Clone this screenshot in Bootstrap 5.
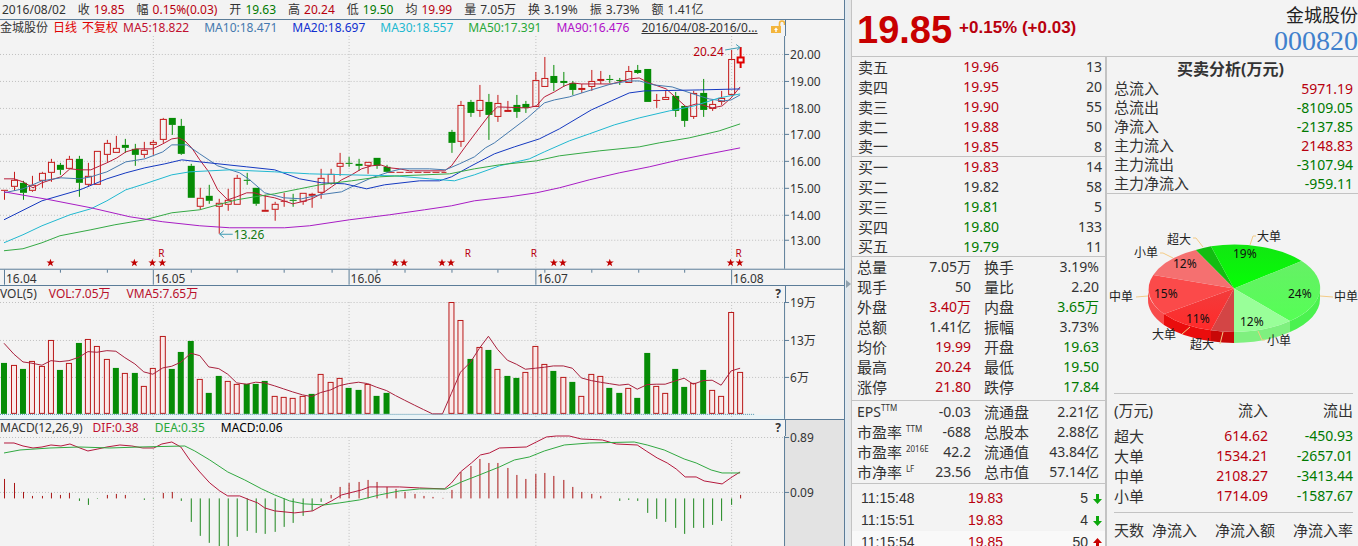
<!DOCTYPE html>
<html lang="zh-CN">
<head>
<meta charset="utf-8">
<meta name="viewport" content="width=device-width, initial-scale=1">
<title>金城股份 000820</title>
<link href="https://cdn.jsdelivr.net/npm/bootstrap@5.3.0/dist/css/bootstrap.min.css" rel="stylesheet">
<style>
:root{--line:#5b7c98;--rule:#c3c3c3;--up:#b8000e;--down:#007a00;--ink:#333}
body{background:#f3f3f3;color:var(--ink);font-family:"Noto Sans","Noto Sans CJK SC",sans-serif;font-size:12px;line-height:16px}
.up{color:var(--up)}
.down{color:var(--down)}
.charts{min-width:0}
.quote-bar{height:20px;gap:12px;padding:0 2px;border-bottom:1px solid var(--line)}
.quote-bar b{font-weight:400;margin-left:4px}
.panel{border-right:1px solid var(--line)}
.panel svg{display:block;width:100%;height:auto;overflow:visible}
.legend-row{height:16px}
.legend-main{width:93%;gap:16px}
.averages{gap:15px}
.dates{gap:13px;margin-left:12px}
.legend-axis{width:7%;border-left:1px solid var(--line)}
.legend-axis.shade{background:#e3e3e3}
.line-top{border-top:1px solid var(--line)}
.help-btn{border:0;background:none;padding:0;font-weight:700;line-height:14px;margin-right:4px;color:var(--ink)}
.range-link{color:var(--ink)}
.splitter{width:6px;background:linear-gradient(90deg,#dfe9f1,#e6e6e6);border:0;padding:0}
.side{width:507px;border-left:1px solid var(--rule)}
.side-head{height:58px;border-bottom:1px solid var(--rule)}
.price{font:700 38px/44px "Liberation Sans",sans-serif;color:#c80000}
.change{font:700 17px/24px "Liberation Sans",sans-serif;color:#b8000e}
.stock-name{font-size:18px;line-height:22px;color:#222}
.stock-code{font:28px/30px "Liberation Serif",serif;color:#3f80cc}
.book{width:255px;border-right:2px solid var(--rule)}
.grid-table{width:100%;table-layout:fixed;font-size:14px;border-collapse:separate;border-spacing:0}
.grid-table td,.grid-table th{height:20px;line-height:20px;padding:0;font-weight:400;white-space:nowrap}
.grid-table th{font-size:15px}
.grid-table td{text-align:right}
.grid-table sup{font-size:8px;top:-6px;line-height:8px}
.sect{border-bottom:1px solid var(--rule)}
.grid-table.sect tr:last-child>*{height:19px;line-height:19px}
.ticks{margin-top:3px}
.ticks td{height:22px;line-height:22px;font-family:"Liberation Sans",sans-serif}
.ticks .hot{background:#f9f9f9}
.flow{font-size:15px;min-width:0}
.flow h2{font-size:16px;font-weight:700;line-height:20px;margin:0;padding-right:6px}
.sum td,.sum th{height:19px;line-height:19px}
.flow-head th{height:32px}
</style>
</head>
<body class="vh-100 overflow-hidden">
<main class="d-flex vh-100">
 <section class="charts flex-grow-1">
  <div class="quote-bar d-flex align-items-center text-nowrap panel">
   <span>2016/08/02</span><span>收<b class="up">19.85</b></span><span>幅<b class="up">0.15%(0.03)</b></span><span>开<b class="down">19.63</b></span><span>高<b class="up">20.24</b></span><span>低<b class="down">19.50</b></span><span>均<b class="up">19.99</b></span><span>量<b>7.05万</b></span><span>换<b>3.19%</b></span><span>振<b>3.73%</b></span><span>额<b>1.41亿</b></span>
  </div>
  <div class="panel">
   <div class="legend-row d-flex text-nowrap">
    <div class="legend-main d-flex gap-0">
     <div class="averages d-flex">
      <span class="d-flex" style="gap:5px"><span>金城股份</span><span style="color:#e00000">日线</span><span style="color:#e00000">不复权</span><span style="color:#c01030">MA5:18.822</span></span>
      <span style="color:#4579ae">MA10:18.471</span><span style="color:#1030d0">MA20:18.697</span><span style="color:#20b8d0">MA30:18.557</span><span style="color:#28a838">MA50:17.391</span><span style="color:#b010c8">MA90:16.476</span>
     </div>
     <div class="dates d-flex">
      <a href="#" class="range-link">2016/04/08-2016/0...</a>
      <svg viewBox="0 0 16 14" style="width:16px;height:14px" aria-hidden="true"><path d="M8.500 6V3.500a2.500 2.500 0 0 1 5 0V5" fill="none" stroke="#f3b53c" stroke-width="1.600"/><path d="M0 6h10v7H0z" fill="#f3b53c"/><path d="M5 7.500 3 10h1.300v2h1.400v-2H7z" fill="#fff"/></svg>
     </div>
    </div>
    <div class="legend-axis"></div>
   </div>
   <svg id="kline" viewBox="0 36 845 249" role="img" aria-label="K线图"></svg>
  </div>
  <div class="panel line-top">
   <div class="legend-row d-flex text-nowrap">
    <div class="legend-main d-flex"><span class="d-flex" style="gap:12px"><span>VOL(5)</span><span style="color:#b8102c">VOL:7.05万</span></span><span style="color:#b8102c">VMA5:7.65万</span><button class="help-btn ms-auto" aria-label="成交量说明">?</button></div>
    <div class="legend-axis"></div>
   </div>
   <svg id="volume" viewBox="0 302 845 117" role="img" aria-label="成交量"></svg>
  </div>
  <div class="panel line-top">
   <div class="legend-row d-flex text-nowrap">
    <div class="legend-main d-flex"><span class="d-flex" style="gap:10px"><span>MACD(12,26,9)</span><span style="color:#c01030">DIF:0.38</span></span><span style="color:#28a838">DEA:0.35</span><span class="text-black">MACD:0.06</span><button class="help-btn ms-auto" aria-label="MACD说明">?</button></div>
    <div class="legend-axis shade"></div>
   </div>
   <svg id="macd" viewBox="0 436 845 112" role="img" aria-label="MACD"></svg>
  </div>
 </section>

 <button class="splitter d-flex flex-shrink-0 align-items-center justify-content-center" aria-label="收起侧栏"><svg width="5" height="8" viewBox="0 0 5 8" style="margin-top:22px"><path d="M0 0l5 4-5 4z" fill="#8fa0ac"/></svg></button>

 <aside class="side flex-shrink-0 d-flex flex-column">
  <header class="side-head d-flex justify-content-between">
   <div class="d-flex align-items-center text-nowrap" style="gap:7px;padding-left:5px"><span class="price pt-1">19.85</span><span class="change">+0.15% (+0.03)</span></div>
   <div class="text-end pt-1"><div class="stock-name">金城股份</div><div class="stock-code">000820</div></div>
  </header>
  <div class="d-flex flex-grow-1">
   <div class="book flex-shrink-0">
    <table class="grid-table sect" id="asks"></table>
    <table class="grid-table sect" id="bids"></table>
    <div class="sect" style="padding-bottom:3px"><table class="grid-table stats" id="stats"></table></div>
    <div class="sect" style="padding-bottom:1px"><table class="grid-table stats" id="values"></table></div>
    <table class="grid-table ticks" id="ticks"></table>
   </div>
   <div class="flow flex-grow-1">
    <div class="sect" style="padding:2px 5px 0 7px">
     <h2 class="text-center">买卖分析(万元)</h2>
     <table class="grid-table sum">
      <tr><th>总流入</th><td class="up">5971.19</td></tr>
      <tr><th>总流出</th><td class="down">-8109.05</td></tr>
      <tr><th>净流入</th><td class="down">-2137.85</td></tr>
      <tr><th>主力流入</th><td class="up">2148.83</td></tr>
      <tr><th>主力流出</th><td class="down">-3107.94</td></tr>
      <tr><th>主力净流入</th><td class="down">-959.11</td></tr>
     </table>
    </div>
    <svg id="pie" class="d-block w-100" viewBox="1107 195 251 199" role="img" aria-label="资金流向">
     <defs>
      <linearGradient id="g1" x1="0" y1="0" x2="0" y2="1"><stop offset="0" stop-color="#12e612"/><stop offset="1" stop-color="#05ff05"/></linearGradient>
      <linearGradient id="g2" x1="0" y1="0" x2="0" y2="1"><stop offset="0" stop-color="#66f066"/><stop offset="1" stop-color="#55ff55"/></linearGradient>
      <linearGradient id="r1" x1="0" y1="0" x2="0" y2="1"><stop offset="0" stop-color="#f23c3c"/><stop offset="1" stop-color="#ff2a2a"/></linearGradient>
     </defs>
     <path d="M1320 289.500A86 43.500 0 0 1 1290 322v11A86 43.500 0 0 0 1320 300z" fill="#4bf24f"/>
     <path d="M1290 322A86 43.500 0 0 1 1234 333v11A86 43.500 0 0 0 1290 333z" fill="#7ff07f"/>
     <path d="M1234 333A86 43.500 0 0 1 1211 331.300v11A86 43.500 0 0 0 1234 344z" fill="#c80808"/>
     <path d="M1211 331.300A86 43.500 0 0 1 1164 315v11A86 43.500 0 0 0 1211 342.300z" fill="#ea0d0d"/>
     <path d="M1164 315A86 43.500 0 0 1 1148 289.500v10.500A86 43.500 0 0 0 1164 326z" fill="#f84b4b"/>
     <g>
      <path d="M1234 289.500L1195.700 251A86 43.500 0 0 1 1211 247.300z" fill="#12bd12"/>
      <path d="M1234 289.500L1211 247.300A86 43.500 0 0 1 1301.700 262z" fill="url(#g1)"/>
      <path d="M1234 289.500L1301.700 262A86 43.500 0 0 1 1290 322z" fill="url(#g2)"/>
      <path d="M1234 289.500L1290 322A86 43.500 0 0 1 1234 333z" fill="#99ff99"/>
      <path d="M1234 289.500V333A86 43.500 0 0 1 1211 331.300z" fill="#d34545"/>
      <path d="M1234 289.500L1211 331.300A86 43.500 0 0 1 1164 315z" fill="url(#r1)"/>
      <path d="M1234 289.500L1164 315A86 43.500 0 0 1 1153.300 276z" fill="#fb4a4a"/>
      <path d="M1234 289.500L1153.300 276A86 43.500 0 0 1 1195.700 251z" fill="#f57070"/>
     </g>
     <path d="M1193 239h3l7 9M1256 237h-3l-3 9M1160 254h3l10 5M1136 298l12-1M1320 297l13 1M1182 335l8-7M1220 345l3-12M1265 341h-3l-4-9" fill="none" stroke="#f3cb86"/>
     <g font-size="12" fill="#222">
      <text x="1167" y="245">超大</text><text x="1257" y="242">大单</text><text x="1134" y="258">小单</text><text x="1109" y="302">中单</text><text x="1334" y="302">中单</text><text x="1152" y="340">大单</text><text x="1190" y="350">超大</text><text x="1267" y="346">小单</text>
      <g fill="#111"><text x="1233" y="259">19%</text><text x="1288" y="299">24%</text><text x="1240" y="327">12%</text><text x="1186" y="324">11%</text><text x="1154" y="299">15%</text><text x="1173" y="269">12%</text></g>
     </g>
    </svg>
    <div style="margin:0 5px 0 7px">
     <div class="border-top sect" style="border-color:var(--rule)!important;padding-bottom:6px">
      <table class="grid-table">
       <colgroup><col><col><col style="width:85px"></colgroup>
       <tr class="flow-head"><th>(万元)</th><th class="text-end">流入</th><th class="text-end">流出</th></tr>
       <tr><th>超大</th><td class="up">614.62</td><td class="down">-450.93</td></tr>
       <tr><th>大单</th><td class="up">1534.21</td><td class="down">-2657.01</td></tr>
       <tr><th>中单</th><td class="up">2108.27</td><td class="down">-3413.44</td></tr>
       <tr><th>小单</th><td class="up">1714.09</td><td class="down">-1587.67</td></tr>
      </table>
     </div>
     <div class="d-flex text-nowrap" style="padding-top:9px"><span>天数</span><span class="ms-2">净流入</span><span class="ms-auto">净流入额</span><span class="ms-auto">净流入率</span></div>
    </div>
   </div>
  </div>
 </aside>
</main>
<script src="https://cdn.jsdelivr.net/npm/bootstrap@5.3.0/dist/js/bootstrap.bundle.min.js"></script>
<script>
const RED='#c41818', GREEN='#058c05', LINE='#5b7c98';
const X=i=>Math.floor(4.7+9.326*i);
const months=[153,349,536,732];
const el=id=>document.getElementById(id);
const hline=(y,x2=785)=>`<path d="M0 ${y}.5H${x2}" stroke="#c0c0c0" stroke-dasharray="1 2"/>`;
const vlines=(a,b)=>months.map(x=>`<path d="M${x}.5 ${a}V${b}" stroke="#c0c0c0" stroke-dasharray="1 2"/>`).join('');
const poly=(pts,c)=>`<polyline points="${pts}" fill="none" stroke="${c}" stroke-width="1"/>`;
const label=(y,t)=>`<path d="M785 ${y}.5h5" stroke="${LINE}"/><text x="791" y="${y+5}" fill="#333">${t}</text>`;
const wrap=s=>`<g font-size="12">${s}</g>`;

/* candles: colour high open/close-top open/close-bottom low */
const candles=`r190 190 191 200,r172 180 187 191,g181 183 193 200,r176 185 191 192,r172 173 181 188,r159 162 173 182,g163 165 170 175,r156 159 169 169,g156 159 183 197,r163 176 185 187,r151 151 185 185,r140 143 155 162,r136 148 153 153,g139 145 148 153,g144 149 155 166,r142 150 155 158,r140 142 145 155,r118 119 140 143,g118 118 125 135,g119 126 154 155,g164 166 198 198,r188 198 207 210,g185 196 201 204,r199 203 207 234,r189 200 205 211,r175 178 205 205,g173 180 181 185,g188 188 204 206,r195 210 212 212,r202 204 210 221,r193 201 202 207,g194 200 201 207,r193 193 202 205,r193 194 196 208,r169 178 193 199,r169 174 184 185,r153 163 167 176,g157 163 164 167,g159 164 166 171,r162 162 166 174,g158 158 166 169,g165 167 172 173,,,,,,,g130 132 143 153,r101 105 142 147,g100 102 113 117,r85 100 111 117,g94 102 115 140,r95 103 117 122,r101 110 112 112,g95 105 112 118,g101 104 108 113,r72 80 107 107,r57 78 87 87,g65 76 83 91,g72 81 83 87,g81 83 90 95,r84 88 90 93,r70 81 87 91,r71 79 81 84,g75 79 80 83,g78 80 81 85,r66 71 83 83,g65 70 73 74,g69 69 102 102,r94 100 101 108,r91 97 100 100,g92 96 111 117,g106 106 121 127,r91 93 117 119,g79 93 110 117,r100 104 109 111,r91 98 102 105,r50 59 95 95,r47 57 63 68`.split(',');
let k=[54,81,108,134,161,188,215,240].map(y=>hline(y)).join('')+vlines(36,269);
candles.forEach((s,i)=>{
  if(!s)return;
  const c=s[0]=='r'?RED:GREEN,[h,a,b,l]=s.slice(1).split(' ').map(Number),x=X(i),w=i==79?2:1;
  k+=`<path d="M${x}.5 ${h}V${a}M${x}.5 ${b}V${l}" stroke="${i==79?'#e00000':c}" stroke-width="${w}"/>`;
  k+=(s[0]=='r'&&b-a>2)?`<rect x="${x-2.5}" y="${a+.5}" width="6" height="${b-a-1}" fill="none" stroke="${i==79?'#e00000':c}" stroke-width="${w}"/>`:`<rect x="${x-3}" y="${a}" width="7" height="${Math.max(1,b-a)}" fill="${c}"/>`;
});
k+=`<path d="M388 172.500H447" stroke="${RED}" stroke-dasharray="7 2"/>`;
k+=poly('4,179 14,179 23,182 33,188 42,183 51,180 61,177 70,169 80,170 91,170 100,166 107,163 117,158 126,152 136,149 153,149 163,144 172,139 179,138 185,141 192,148 200,160 209,172 218,190 228,200 237,197 247,193 255,193 264,196 275,198 284,201 293,204 302,202 312,199 322,194 332,187 342,180 352,175 362,169 372,166 381,165 390,168 400,169 410,171 445,171 452,166 465,148 480,128 490,115 498,107 528,108 537,106 545,97 555,92 565,86 573,83 582,84 612,84 620,82 630,79 640,78 650,83 667,89 677,98 687,107 697,104 703,105 713,108 723,106 732,98 741,87','#b81c38');
k+=poly('4,193 23,189 42,181 61,178 80,179 91,177 107,172 126,162 145,159 163,152 172,145 187,145 200,154 218,166 240,173 250,180 265,193 284,198 302,199 320,195 342,192 352,187 372,178 390,172 402,169 430,169 446,170 460,164 475,157 486,148 495,143 528,118 545,103 555,100 570,97 592,90 612,84 630,81 640,81 655,85 673,87 685,91 697,95 710,99 724,101 732,100 741,95','#4579ae');
k+=poly('4,220 42,201 80,190 107,179 126,173 145,168 165,164 182,160 200,162 247,167 275,170 300,179 322,183 345,184 367,189 385,185 420,181 440,181 452,177 470,167 495,154 515,147 540,139 560,129 592,110 612,101 630,93 645,91 700,90 741,89','#1438c0');
k+=poly('4,243 23,235 42,226 70,215 91,209 107,201 126,190 145,184 172,175 190,172 230,170 275,172 310,174 350,175 395,176 430,179 455,181 475,175 500,166 530,159 545,152 570,141 590,134 615,125 640,118 670,111 695,106 720,98 741,94','#20b8d0');
k+=poly('4,251 23,249 42,243 60,236 91,230 115,225 145,220 172,213 200,210 218,205 237,200 255,197 275,194 300,189 320,185 352,181 380,177 400,176 450,174 475,169 500,165 537,161 560,156 600,151 640,147 660,143 690,138 720,131 741,124','#34a944');
k+=poly('4,192 50,200 91,208 130,217 163,222 200,226 230,228 285,228 310,226 350,220 390,215 425,210 452,206 475,201 510,197 537,193 560,188 590,180 620,173 650,167 680,160 705,155 741,148','#a81cc4');
k+=`<g fill="none" stroke="#3d9cb4"><path d="M233 234.500H220M224 231l-4 3.500 4 3.500"/><path d="M726 50L741 47.500M737 44.500l4 3-3 2.500"/></g>
<text x="234" y="239" fill="#107810">13.26</text><text x="694" y="56" fill="#b8000e">20.24</text>`;
const star='M0-4 1-1.200 4-1.200 1.600.600 2.500 3.500 0 1.800-2.500 3.500-1.600.600-4-1.200-1-1.200z';
[50,134,152,162,395,404,442,451,554,563,610,731,740].forEach(x=>k+=`<path transform="translate(${x+.5} 263)" d="${star}" fill="#c00000"/>`);
[161,468,534,739].forEach(x=>k+=`<text x="${x+.5}" y="257" font-size="10" text-anchor="middle" fill="#b8000e">R</text>`);
k+=[20,19,18,17,16,15,14,13].map((v,i)=>label([54,81,108,134,161,188,215,240][i],v+'.00')).join('');
k+=`<path d="M785.500 36V269M0 269.500H845" stroke="${LINE}"/>`;
[60,107,191,237,284,332,377,405,452,498,545,592,639,685].forEach(x=>k+=`<path d="M${x}.5 270v3" stroke="${LINE}"/>`);
[4,...months].forEach((x,i)=>k+=`<path d="M${x}.5 270v15" stroke="${LINE}"/><text x="${x+2}" y="283" fill="#333">16.0${i+4}</text>`);
el('kline').innerHTML=wrap(k);

/* bar tops in thirds of a unit below the panel's head, colour first */
const vol=`g234 r240 g252 r229 r244 r166 g255 r235 g174 r163 r184 r223 g249 r265 g264 r304 r250 r154 g252 g201 g168 r283 g324 g273 r289 r298 g298 g297 g288 r334 r337 r340 r334 g328 r268 r292 r280 g309 g315 r296 g333 g324 - - - - - - r52 r106 g222 r187 g195 r253 g273 g279 r262 r184 r238 g258 r277 g291 r334 r268 r274 g309 g324 r310 g339 g204 r304 r325 g252 g306 r295 g255 r316 r334 r82 r262`.split(' ');
const vma=[175,208,231,235,241,227,230,227,217,200,202,197,199,218,237,261,268,249,244,232,205,212,246,251,268,294,298,292,294,303,312,321,330,335,323,315,302,296,292,296,307,317,332,346,361,374,387,387,325,262,232,190,154,193,226,238,253,250,247,243,243,250,279,287,292,296,301,298,313,299,298,298,288,280,298,287,286,301,258,250];
let v=`<path d="M0 415H785V419H0z" fill="#eaf4f7"/>`+hline(302)+hline(340)+hline(377)+vlines(302,419);
vol.forEach((s,i)=>{
  if(s=='-')return;
  const y=285+Math.round(s.slice(1)/3),x=X(i);
  v+=s[0]=='g'?`<rect x="${x-3}" y="${y}" width="6" height="${414-y}" fill="#068c06"/>`:`<rect x="${x-2.5}" y="${y+.5}" width="5" height="${413-y}" fill="#fbe9e9" stroke="#b81818"/>`;
});
v+=poly(vma.map((y,i)=>X(i)+','+(285+y/3).toFixed(1)).join(' '),'#a8203c')+`<path d="M0 414.500H755" stroke="#4a94b0" stroke-dasharray="1 1"/>`;
v+=label(302,'19万')+label(340,'13万')+label(377,'6万')+`<path d="M785.500 302V419" stroke="${LINE}"/>`;
el('volume').innerHTML=wrap(v);

/* MACD columns, measured against the 250 zero line */
const mac=[192,204,231,243,243,234,240,234,258,270,253,240,237,240,250,255,253,234,231,258,321,363,384,396,396,366,348,354,357,350,336,324,303,288,261,240,216,204,201,195,201,215,222,231,237,243,246,248,225,171,153,132,144,144,159,180,192,177,174,183,195,216,231,237,243,250,258,255,258,294,312,321,339,357,339,339,330,318,270,240];
let m=`<path d="M785 436h60v112h-60z" fill="#e3e3e3"/>`+hline(437)+hline(492)+vlines(437,548);
mac.forEach((z,i)=>{if(z!=250)m+=`<path d="M${X(i)}.5 498.500V${Math.round(415+z/3)}" stroke="${z<250?'#a81414':'#1c861c'}"/>`});
m+=poly('4,443 14,443 23,446 33,448 42,447 51,445 61,446 70,444 80,448 88,451 98,449 107,447 120,445 132,446 143,448 154,448 162,444 172,442 181,447 190,460 200,472 210,483 220,491 228,496 240,496 250,500 258,503 265,508 275,511 295,513 313,511 322,506 332,501 342,495 350,493 362,490 370,487 400,487 420,488 445,489 452,483 461,472 472,463 481,455 490,453 500,448 527,447 537,442 547,437 557,436 570,436 582,439 603,440 617,444 638,445 647,451 658,458 668,463 677,469 686,477 697,477 705,481 723,484 733,477 741,472','#b4183c');
m+=poly('4,453 20,450 50,448 80,447 110,448 140,447 185,446 195,451 210,460 228,472 245,480 262,489 275,495 290,501 305,504 325,505 340,503 360,500 380,495 400,491 420,489 447,489 462,482 480,475 500,467 515,460 530,457 545,451 565,445 590,443 635,442 648,445 665,450 685,459 697,463 712,470 723,473 741,473','#30a840');
m+=label(437,'0.89')+label(492,'0.09')+`<path d="M785.500 436V548" stroke="${LINE}"/>`;
el('macd').innerHTML=wrap(m);

const book=(id,rows)=>el(id).innerHTML='<colgroup><col style="width:57px"><col style="width:90px"><col></colgroup>'+rows.map(([a,b,c,k])=>`<tr><th style="padding-left:6px">${a}</th><td class="${k}">${b}</td><td style="padding-right:3px">${c}</td></tr>`).join('');
book('asks',[['卖五','19.96',13,'up'],['卖四','19.95',20,'up'],['卖三','19.90',55,'up'],['卖二','19.88',50,'up'],['卖一','19.85',8,'up']]);
book('bids',[['买一','19.83',14,'up'],['买二','19.82',58,''],['买三','19.81',5,'down'],['买四','19.80',133,'down'],['买五','19.79',11,'down']]);
const stats=(id,rows)=>el(id).innerHTML='<colgroup><col style="width:74px"><col style="width:45px"><col style="width:64px"><col></colgroup>'+rows.map(([a,b,c,d,k='',l=''])=>`<tr><th style="padding-left:5px">${a}</th><td class="${k}">${b}</td><th style="padding-left:13px">${c}</th><td class="${l}" style="padding-right:6px">${d}</td></tr>`).join('');
stats('stats',[['总量','7.05万','换手','3.19%'],['现手','50','量比','2.20'],['外盘','3.40万','内盘','3.65万','up','down'],['总额','1.41亿','振幅','3.73%'],['均价','19.99','开盘','19.63','up','down'],['最高','20.24','最低','19.50','up','down'],['涨停','21.80','跌停','17.84','up','down']]);
stats('values',[['<span style="font-size:14px">EPS</span><sup>TTM</sup>','-0.03','流通盘','2.21亿'],['市盈率 <sup>TTM</sup>','-688','总股本','2.88亿'],['市盈率 <sup>2016E</sup>','42.2','流通值','43.84亿'],['市净率 <sup>LF</sup>','23.56','总市值','57.14亿']]);
const arrow=u=>`<svg width="9" height="10" viewBox="0 0 9 10"><path d="${u?'M4.500 0 9 5H6v5H3V5H0z':'M4.500 10 0 5h3V0h3v5h3z'}" fill="${u?'#c80000':'#0ca80c'}"/></svg>`;
el('ticks').innerHTML='<colgroup><col style="width:80px"><col style="width:71px"><col><col style="width:17px"></colgroup>'+[['11:15:48','19.83',5,0],['11:15:51','19.83',4,0],['11:15:54','19.85',50,1]].map(([t,p,n,u])=>`<tr class="${u?'hot':''}"><td class="text-start" style="padding-left:9px">${t}</td><td class="up">${p}</td><td>${n}</td><td style="padding-right:3px">${arrow(u)}</td></tr>`).join('');
</script>
</body>
</html>
